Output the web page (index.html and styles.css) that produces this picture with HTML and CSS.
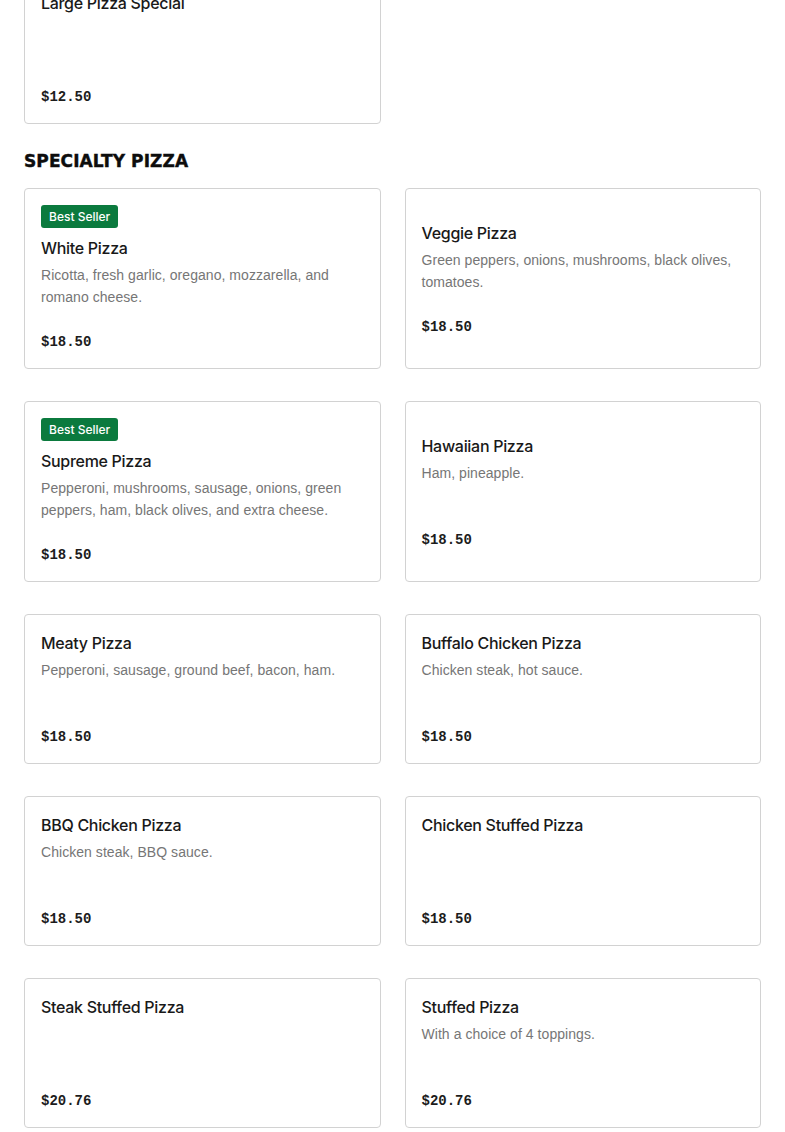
FILE: index.html
```html
<!DOCTYPE html>
<html lang="en">
<head>
<meta charset="utf-8">
<title>Menu</title>
<link rel="stylesheet" href="styles.css">
</head>
<body>
<main class="menu">
  <section class="section">
    <div class="grid">
      <article class="card">
        <div class="card-body">
          <h3 class="item-name">Large Pizza Special</h3>
          <p class="item-desc"></p>
          <div class="price">$12.50</div>
        </div>
      </article>
    </div>
  </section>

  <section class="section">
    <h2 class="section-title">SPECIALTY PIZZA</h2>
    <div class="grid">
      <article class="card">
        <div class="card-body">
          <span class="badge">Best Seller</span>
          <h3 class="item-name">White Pizza</h3>
          <p class="item-desc">Ricotta, fresh garlic, oregano, mozzarella, and romano cheese.</p>
          <div class="price">$18.50</div>
        </div>
      </article>
      <article class="card">
        <div class="card-body">
          <h3 class="item-name">Veggie Pizza</h3>
          <p class="item-desc">Green peppers, onions, mushrooms, black olives, tomatoes.</p>
          <div class="price">$18.50</div>
        </div>
      </article>
      <article class="card">
        <div class="card-body">
          <span class="badge">Best Seller</span>
          <h3 class="item-name">Supreme Pizza</h3>
          <p class="item-desc">Pepperoni, mushrooms, sausage, onions, green peppers, ham, black olives, and extra cheese.</p>
          <div class="price">$18.50</div>
        </div>
      </article>
      <article class="card">
        <div class="card-body">
          <h3 class="item-name">Hawaiian Pizza</h3>
          <p class="item-desc">Ham, pineapple.</p>
          <div class="price">$18.50</div>
        </div>
      </article>
      <article class="card">
        <div class="card-body">
          <h3 class="item-name">Meaty Pizza</h3>
          <p class="item-desc">Pepperoni, sausage, ground beef, bacon, ham.</p>
          <div class="price">$18.50</div>
        </div>
      </article>
      <article class="card">
        <div class="card-body">
          <h3 class="item-name">Buffalo Chicken Pizza</h3>
          <p class="item-desc">Chicken steak, hot sauce.</p>
          <div class="price">$18.50</div>
        </div>
      </article>
      <article class="card">
        <div class="card-body">
          <h3 class="item-name">BBQ Chicken Pizza</h3>
          <p class="item-desc">Chicken steak, BBQ sauce.</p>
          <div class="price">$18.50</div>
        </div>
      </article>
      <article class="card">
        <div class="card-body">
          <h3 class="item-name">Chicken Stuffed Pizza</h3>
          <p class="item-desc"></p>
          <div class="price">$18.50</div>
        </div>
      </article>
      <article class="card">
        <div class="card-body">
          <h3 class="item-name">Steak Stuffed Pizza</h3>
          <p class="item-desc"></p>
          <div class="price">$20.76</div>
        </div>
      </article>
      <article class="card">
        <div class="card-body">
          <h3 class="item-name">Stuffed Pizza</h3>
          <p class="item-desc">With a choice of 4 toppings.</p>
          <div class="price">$20.76</div>
        </div>
      </article>
    </div>
  </section>
</main>
</body>
</html>
```
FILE: styles.css
```css
* { box-sizing: border-box; }

html, body {
  margin: 0;
  padding: 0;
  background: #ffffff;
}

body {
  font-family: "Liberation Sans", Arial, sans-serif;
  color: #1c1c1c;
}

.menu {
  padding: 0 24px;
  margin-top: -26px;
}

.section-title {
  margin: 25px 0 15px;
  font-family: "DejaVu Sans", sans-serif;
  font-weight: 700;
  font-size: 17px;
  line-height: 24px;
  letter-spacing: 0.1px;
  color: #0d0d0d;
  -webkit-text-stroke: 0.4px #0d0d0d;
}

.grid {
  display: grid;
  grid-template-columns: 1fr 1fr;
  column-gap: 24px;
  row-gap: 32px;
}

.card {
  border: 1px solid #d2d2d2;
  border-radius: 4px;
  background: #ffffff;
  padding: 16px;
  display: flex;
  flex-direction: column;
  justify-content: center;
}

.card-body {
  display: flex;
  flex-direction: column;
  align-items: flex-start;
}

.badge {
  display: inline-block;
  height: 23px;
  line-height: 23px;
  padding: 0 8px;
  margin-bottom: 8px;
  border-radius: 3px;
  background: #0b7a3e;
  color: #ffffff;
  font-family: "Inter", sans-serif;
  font-weight: 500;
  font-size: 12px;
}

.item-name {
  margin: 0;
  font-family: "Inter", sans-serif;
  font-weight: 500;
  font-size: 16px;
  line-height: 24px;
  letter-spacing: -0.3px;
  color: #191919;
}

.item-desc {
  margin: 4px 0 0;
  min-height: 44px;
  font-size: 14px;
  line-height: 22px;
  color: #767676;
  letter-spacing: 0.05px;
}

.price {
  margin-top: 24px;
  font-family: "Liberation Mono", monospace;
  font-weight: 700;
  font-size: 14px;
  line-height: 20px;
  color: #1c1c1c;
}
```
